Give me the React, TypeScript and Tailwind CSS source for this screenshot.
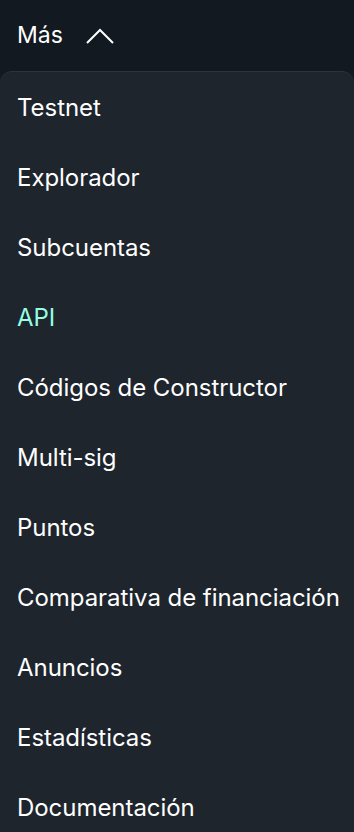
const items = [
  "Testnet",
  "Explorador",
  "Subcuentas",
  "API",
  "Códigos de Constructor",
  "Multi-sig",
  "Puntos",
  "Comparativa de financiación",
  "Anuncios",
  "Estadísticas",
  "Documentación",
];

export default function App() {
  return (
    <div className="min-h-[832px] w-[354px] overflow-hidden bg-[#121920] font-['Inter',sans-serif] text-white">
      <div className="flex h-[71px] items-center gap-[23px] px-[17px] pb-[1px]">
        <span className="text-[23px] font-normal">Más</span>
        <svg width="28" height="16" viewBox="0 0 28 16" fill="none" className="mt-[1px]">
          <path d="M1 15L14 2L27 15" stroke="white" strokeWidth="2" />
        </svg>
      </div>
      <div className="rounded-t-[12px] border-t border-[#2b333b] bg-[#1e252d] pt-[1px]">
        {items.map((label) => (
          <div
            key={label}
            className={`flex h-[70px] items-center whitespace-nowrap px-[17px] text-[24px] tracking-[-0.05px] font-normal ${
              label === "API" ? "text-[#97fce4]" : "text-white"
            }`}
          >
            {label}
          </div>
        ))}
      </div>
    </div>
  );
}
